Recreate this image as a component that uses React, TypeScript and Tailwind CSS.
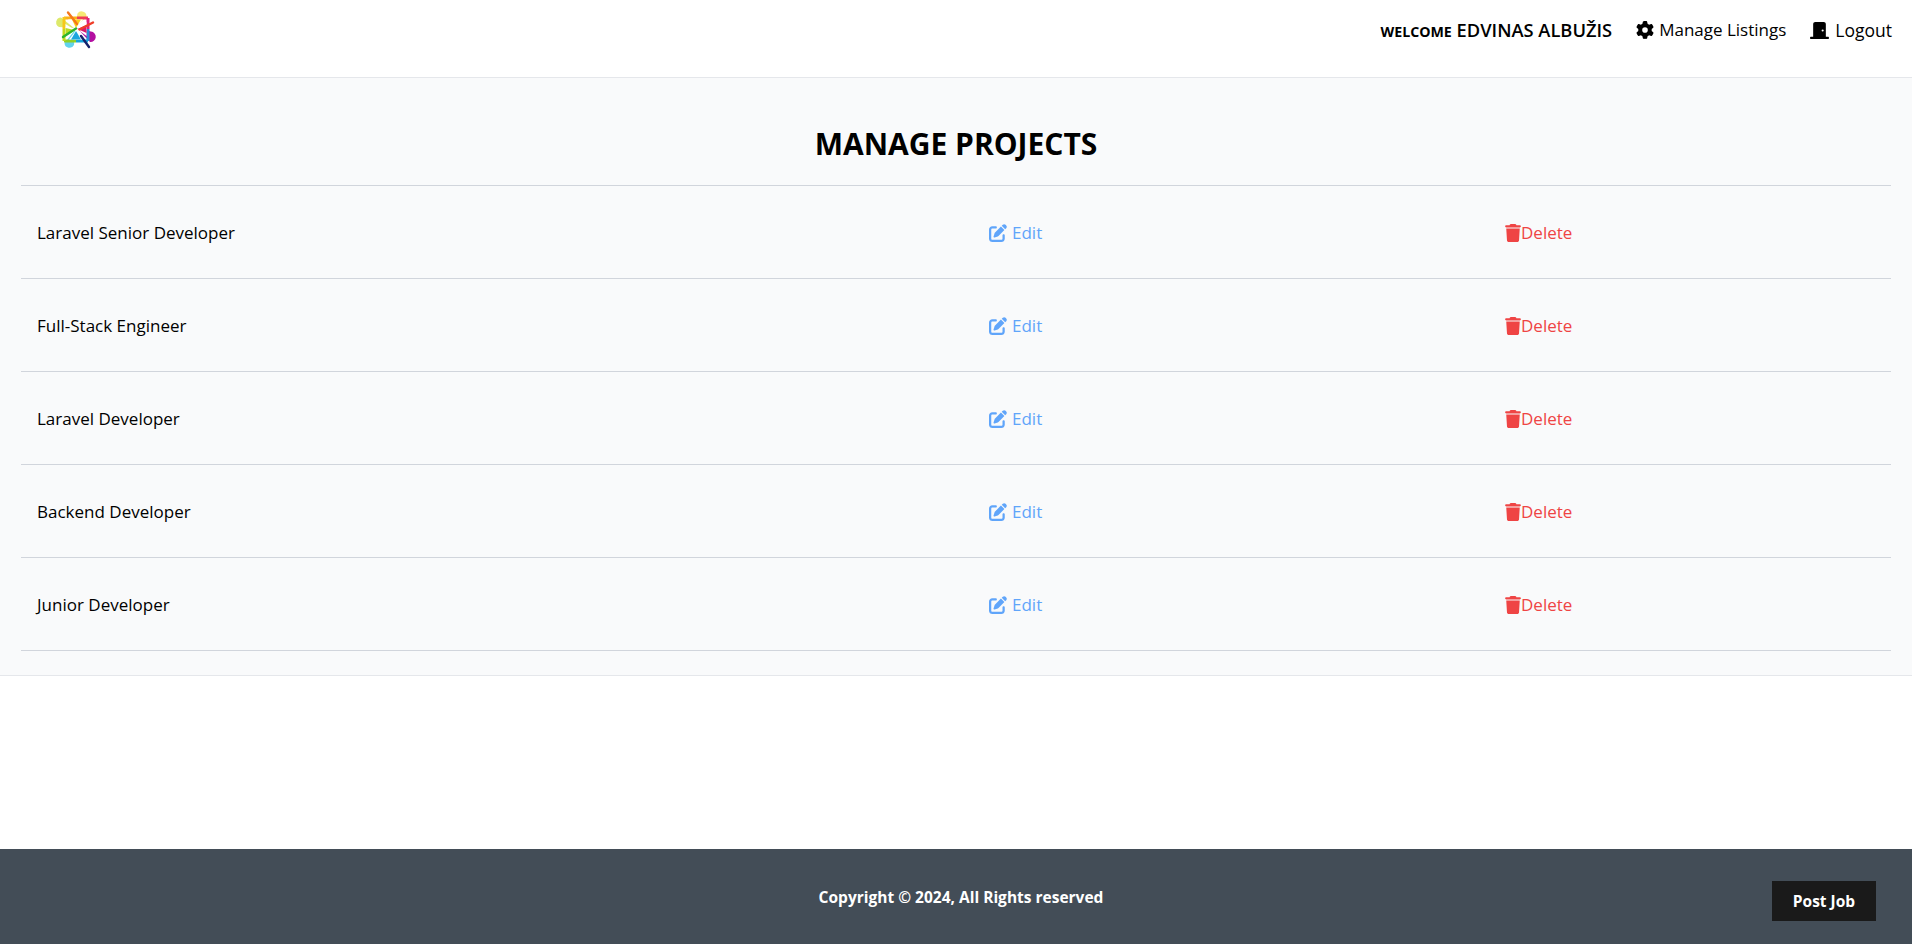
import React from 'react';
import { FaGear, FaDoorClosed, FaPenToSquare, FaTrash } from 'react-icons/fa6';

const projects = [
    'Laravel Senior Developer',
    'Full-Stack Engineer',
    'Laravel Developer',
    'Backend Developer',
    'Junior Developer',
];

const Logo = () => (
    <svg viewBox="0 0 48 48" className="w-12 h-12" fill="none">
        {/* petals */}
        <path d="M22 20 L24.5 6.5 A5 5 0 0 1 33.5 10 Z" fill="#f6e873" />
        <path d="M21 21 L8 10.5 A5 5 0 0 0 6 20 Z" fill="#dde96a" />
        <path d="M24 21 L38 24.5 A5 5 0 0 1 37 35 Z" fill="#b30fa0" />
        <path d="M22 23 L21 38 A5 5 0 0 1 11.5 36 Z" fill="#62d3ec" />
        {/* frame */}
        <path d="M11 11 H24" stroke="#fbb116" strokeWidth="3" />
        <path d="M24 11 H35" stroke="#ef3b55" strokeWidth="3" />
        <path d="M35 11 V22" stroke="#e0207a" strokeWidth="3" />
        <path d="M35 22 V34" stroke="#2a8fd6" strokeWidth="3" />
        <path d="M35 34 H23" stroke="#16a5dc" strokeWidth="3" />
        <path d="M23 34 H11" stroke="#8fd028" strokeWidth="3" />
        <path d="M11 34 V22" stroke="#c4d81e" strokeWidth="3" />
        <path d="M11 22 V10" stroke="#f6c81a" strokeWidth="3" />
        {/* inner triangles */}
        <path d="M15 12.5 H30 L22.5 21 Z" fill="#ffffff" />
        <path d="M19 12.5 H28 L23 21 Z" fill="#f9cf1c" />
        <path d="M33.5 15 V29 L24 22 Z" fill="#ffffff" />
        <path d="M33.5 18 V26 L24.5 22 Z" fill="#d41a6c" />
        <path d="M12.5 17 V29 L22 23 Z" fill="#ffffff" />
        <path d="M12.5 21 V28 L21.5 23 Z" fill="#b6dc22" />
        <path d="M16 32.5 H31 L23 23.5 Z" fill="#ffffff" />
        <path d="M18 32.5 H28 L23 24 Z" fill="#1aa6de" />
        {/* sticks */}
        <path d="M15 5.5 L24 17" stroke="#f5761a" strokeWidth="2.4" strokeLinecap="round" />
        <path d="M40 15.5 L26.5 22.5" stroke="#ef3d28" strokeWidth="2.4" strokeLinecap="round" />
        <path d="M10 30 L23 21.5" stroke="#2bb52e" strokeWidth="2.4" strokeLinecap="round" />
        <path d="M36 40 L28 29" stroke="#15206b" strokeWidth="2.4" strokeLinecap="round" />
    </svg>
);

const App = () => {
    return (
        <div className="relative flex flex-col h-screen bg-white text-black font-['Open_Sans',sans-serif] overflow-hidden">
            <nav className="flex justify-between items-start h-[78px] border-b border-gray-200 shrink-0">
                <div className="pl-[53px] pt-[7px]">
                    <Logo />
                </div>
                <ul className="flex items-center gap-6 pr-[20px] h-[60px] text-[17px]">
                    <li className="font-semibold text-[18.3px]">
                        <span className="text-[14.2px] font-bold uppercase">Welcome</span> EDVINAS ALBUŽIS
                    </li>
                    <li className="flex items-center gap-[5px]">
                        <FaGear className="text-[18px]" />
                        Manage Listings
                    </li>
                    <li className="flex items-center gap-[6px] text-[17.5px]">
                        <FaDoorClosed className="text-[19px]" />
                        Logout
                    </li>
                </ul>
            </nav>

            <main className="bg-gray-50 border-b border-gray-200 px-[21px] pb-6 shrink-0">
                <h1 className="text-[30px] leading-9 font-bold uppercase text-center pt-12 pb-[19px] border-b border-gray-300 h-[107.5px]">
                    Manage Projects
                </h1>
                {projects.map((title) => (
                    <div key={title} className="grid grid-cols-[952px_516px_402px] border-b border-gray-300 pt-[33px] pb-[31px] text-[17px] leading-7">
                        <div className="px-4">{title}</div>
                        <div className="px-4 flex items-center gap-[5px] text-[#60a5fa]">
                            <FaPenToSquare className="text-[18px]" />
                            Edit
                        </div>
                        <div className="px-4 flex items-center text-[#ef4444]">
                            <FaTrash className="text-[18px] -ml-[1px] -mr-[1px]" />
                            Delete
                        </div>
                    </div>
                ))}
            </main>

            <footer className="mt-auto h-[95px] bg-[#434d57] text-white font-bold text-[15.5px] flex items-center justify-center shrink-0 pl-[10px] pt-[3px]">
                <p>Copyright © 2024, All Rights reserved</p>
                <a className="absolute right-9 bottom-[23px] w-[104px] h-10 flex items-center justify-center bg-[#1a1a1a] text-[15.5px] pt-[2px]">
                    Post Job
                </a>
            </footer>
        </div>
    );
};

export default App;
